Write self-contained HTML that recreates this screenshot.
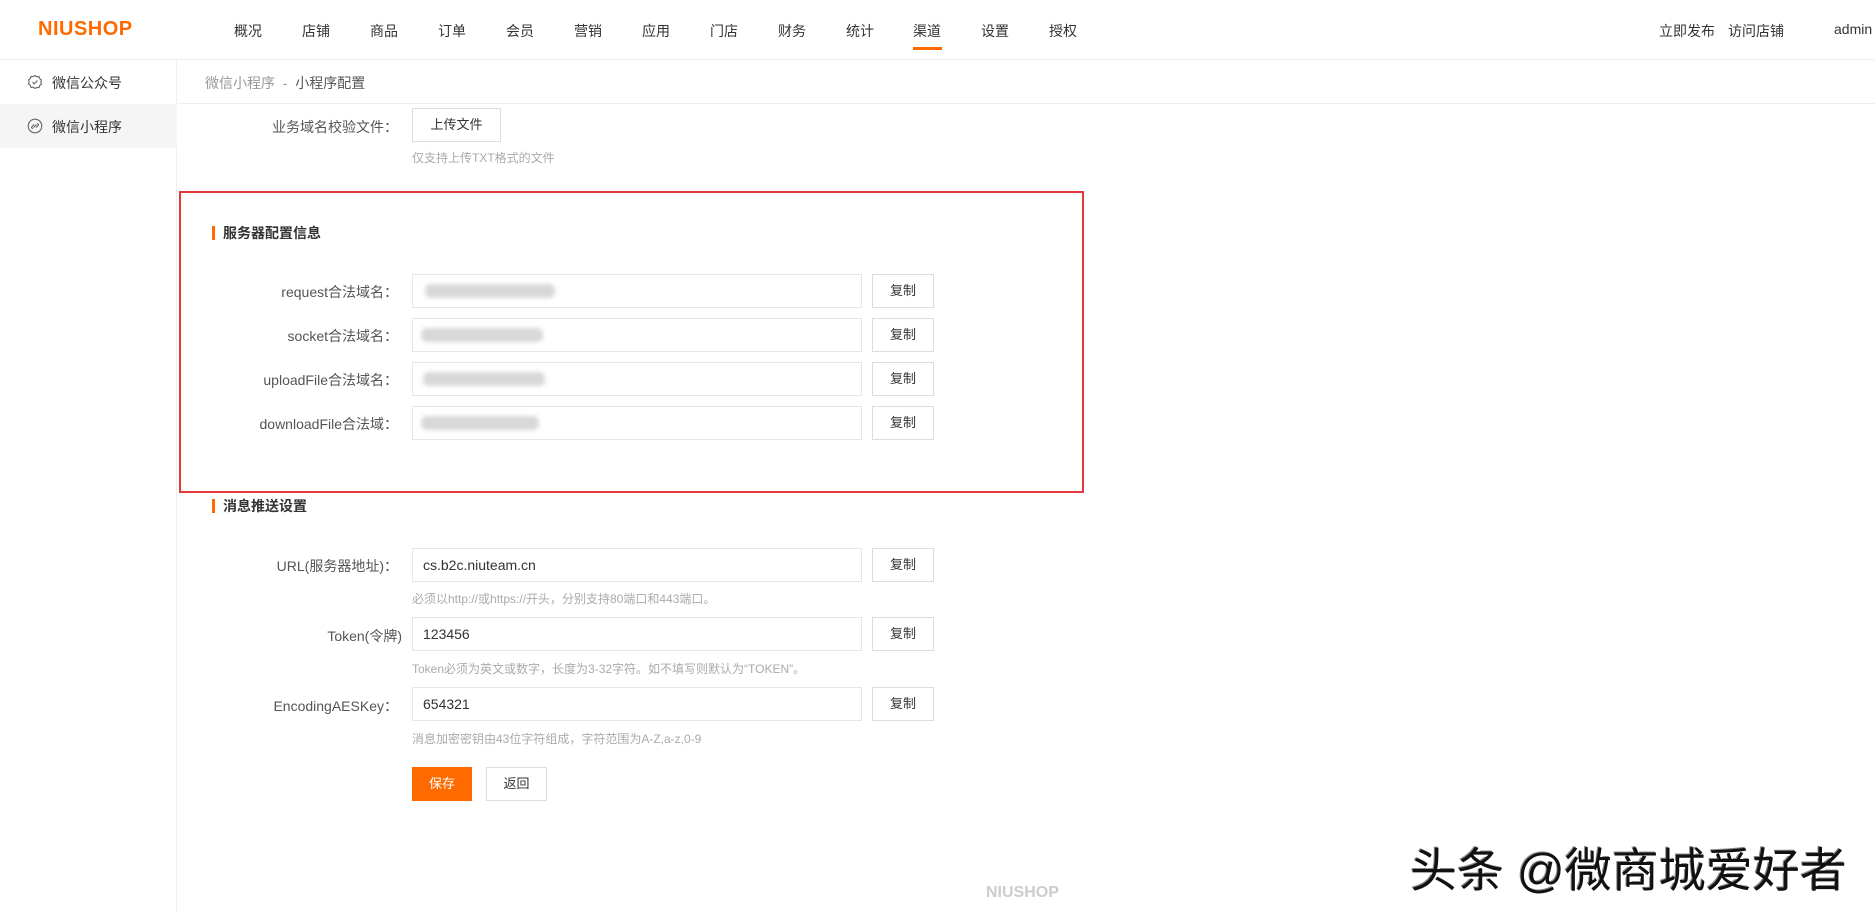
<!DOCTYPE html>
<html><head><meta charset="utf-8"><style>
*{margin:0;padding:0;box-sizing:border-box}
body{width:1875px;height:912px;overflow:hidden;background:#fff;font-family:"Liberation Sans","Noto Sans CJK SC",sans-serif;color:#333;font-size:14px;position:relative}
.a{position:absolute;white-space:nowrap}
.hdr{position:absolute;left:0;top:0;width:1875px;height:60px;border-bottom:1px solid #eee}
.nav{top:21px;font-size:14px;color:#333}
.side{position:absolute;left:0;top:61px;width:177px;height:851px;border-right:1px solid #eee}
.lbl{font-size:14px;color:#555;text-align:right;width:230px;left:168px}
.inp{position:absolute;left:412px;width:450px;height:34px;border:1px solid #e6e6e6;background:#fff;padding:0 10px;line-height:32px;font-size:14px;color:#333}
.btn{position:absolute;left:872px;width:62px;height:34px;border:1px solid #ddd;background:#fff;text-align:center;line-height:32px;font-size:13px;color:#333}
.hint{left:412px;font-size:12px;color:#aaa}
.blur{position:absolute;top:9px;height:14px;background:#d8d8d8;border-radius:6px;filter:blur(2px)}
.ttl{font-size:14px;font-weight:bold;color:#333;padding-left:8px;border-left:3px solid #ff6a00;line-height:14px}
</style></head><body>
<div class="hdr"></div>
<div class="a" style="left:38px;top:18px;font-size:20px;font-weight:bold;color:#ff6a00;letter-spacing:0.5px">NIUSHOP</div>
<div class="a nav" style="left:234px">概况</div>
<div class="a nav" style="left:302px">店铺</div>
<div class="a nav" style="left:370px">商品</div>
<div class="a nav" style="left:438px">订单</div>
<div class="a nav" style="left:506px">会员</div>
<div class="a nav" style="left:574px">营销</div>
<div class="a nav" style="left:642px">应用</div>
<div class="a nav" style="left:710px">门店</div>
<div class="a nav" style="left:778px">财务</div>
<div class="a nav" style="left:846px">统计</div>
<div class="a nav" style="left:913px">渠道</div>
<div class="a" style="left:913px;top:47px;width:29px;height:3px;background:#ff6a00"></div>
<div class="a nav" style="left:981px">设置</div>
<div class="a nav" style="left:1049px">授权</div>
<div class="a nav" style="left:1659px">立即发布</div>
<div class="a nav" style="left:1728px">访问店铺</div>
<div class="a nav" style="left:1834px">admin</div>

<div class="side"></div>
<div class="a" style="left:0;top:104px;width:177px;height:44px;background:#f5f5f5"></div>
<svg class="a" style="left:27px;top:74px" width="16" height="16" viewBox="0 0 16 16"><path d="M8 1.5l1.8 1.3 2.2-.2.7 2.1 1.8 1.3-.7 2.1.7 2.1-1.8 1.3-.7 2.1-2.2-.2L8 14.5l-1.8-1.3-2.2.2-.7-2.1-1.8-1.3.7-2.1-.7-2.1 1.8-1.3.7-2.1 2.2.2z" fill="none" stroke="#666" stroke-width="1.1"/><path d="M5.5 8.2l1.7 1.6 3.3-3.3" fill="none" stroke="#666" stroke-width="1.1"/></svg>
<div class="a" style="left:52px;top:73px;color:#333">微信公众号</div>
<svg class="a" style="left:27px;top:118px" width="16" height="16" viewBox="0 0 16 16"><circle cx="8" cy="8" r="6.8" fill="none" stroke="#666" stroke-width="1.1"/><path d="M6 10.5c-1.2 0-1.8-1.2-1-2l2-2M10 5.5c1.2 0 1.8 1.2 1 2l-2 2M6.5 9.5l3-3" fill="none" stroke="#666" stroke-width="1.1"/></svg>
<div class="a" style="left:52px;top:117px;color:#333">微信小程序</div>

<div class="a" style="left:178px;top:103px;width:1697px;height:1px;background:#eee"></div>
<div class="a" style="left:205px;top:73px;color:#999">微信小程序 &nbsp;-&nbsp; <span style="color:#555">小程序配置</span></div>

<div class="a lbl" style="top:117px">业务域名校验文件：</div>
<div class="a" style="left:412px;top:108px;width:89px;height:34px;border:1px solid #ddd;text-align:center;line-height:32px;font-size:13px">上传文件</div>
<div class="a hint" style="top:149px">仅支持上传TXT格式的文件</div>

<div class="a" style="left:179px;top:191px;width:905px;height:302px;border:2.5px solid #e5383d"></div>
<div class="a ttl" style="left:212px;top:226px">服务器配置信息</div>

<div class="a lbl" style="top:282px">request合法域名：</div>
<div class="inp" style="top:274px"><div class="blur" style="left:12px;width:130px"></div></div><div class="btn" style="top:274px">复制</div>
<div class="a lbl" style="top:326px">socket合法域名：</div>
<div class="inp" style="top:318px"><div class="blur" style="left:8px;width:122px"></div></div><div class="btn" style="top:318px">复制</div>
<div class="a lbl" style="top:370px">uploadFile合法域名：</div>
<div class="inp" style="top:362px"><div class="blur" style="left:10px;width:122px"></div></div><div class="btn" style="top:362px">复制</div>
<div class="a lbl" style="top:414px">downloadFile合法域：</div>
<div class="inp" style="top:406px"><div class="blur" style="left:8px;width:118px"></div></div><div class="btn" style="top:406px">复制</div>

<div class="a ttl" style="left:212px;top:499px">消息推送设置</div>

<div class="a lbl" style="top:556px">URL(服务器地址)：</div>
<div class="inp" style="top:548px">cs.b2c.niuteam.cn</div><div class="btn" style="top:548px">复制</div>
<div class="a hint" style="top:590px">必须以http://或https://开头，分别支持80端口和443端口。</div>
<div class="a lbl" style="top:626px;left:172px">Token(令牌)</div>
<div class="inp" style="top:617px">123456</div><div class="btn" style="top:617px">复制</div>
<div class="a hint" style="top:660px">Token必须为英文或数字，长度为3-32字符。如不填写则默认为“TOKEN”。</div>
<div class="a lbl" style="top:696px">EncodingAESKey：</div>
<div class="inp" style="top:687px">654321</div><div class="btn" style="top:687px">复制</div>
<div class="a hint" style="top:730px">消息加密密钥由43位字符组成，字符范围为A-Z,a-z,0-9</div>

<div class="a" style="left:412px;top:767px;width:60px;height:34px;background:#ff6a00;color:#fff;text-align:center;line-height:34px;font-size:13px">保存</div>
<div class="a" style="left:486px;top:767px;width:61px;height:34px;border:1px solid #ddd;text-align:center;line-height:32px;font-size:13px">返回</div>

<div class="a" style="left:986px;top:884px;font-size:16px;font-weight:bold;color:#ccc">NIUSHOP</div>
<div class="a" style="left:1410px;top:832px;font-size:47px;color:#111;text-shadow:2px 2px 0 #fff,-1px -1px 0 #888;font-family:'Liberation Sans','Noto Sans CJK SC',sans-serif">头条 @微商城爱好者</div>
</body></html>
